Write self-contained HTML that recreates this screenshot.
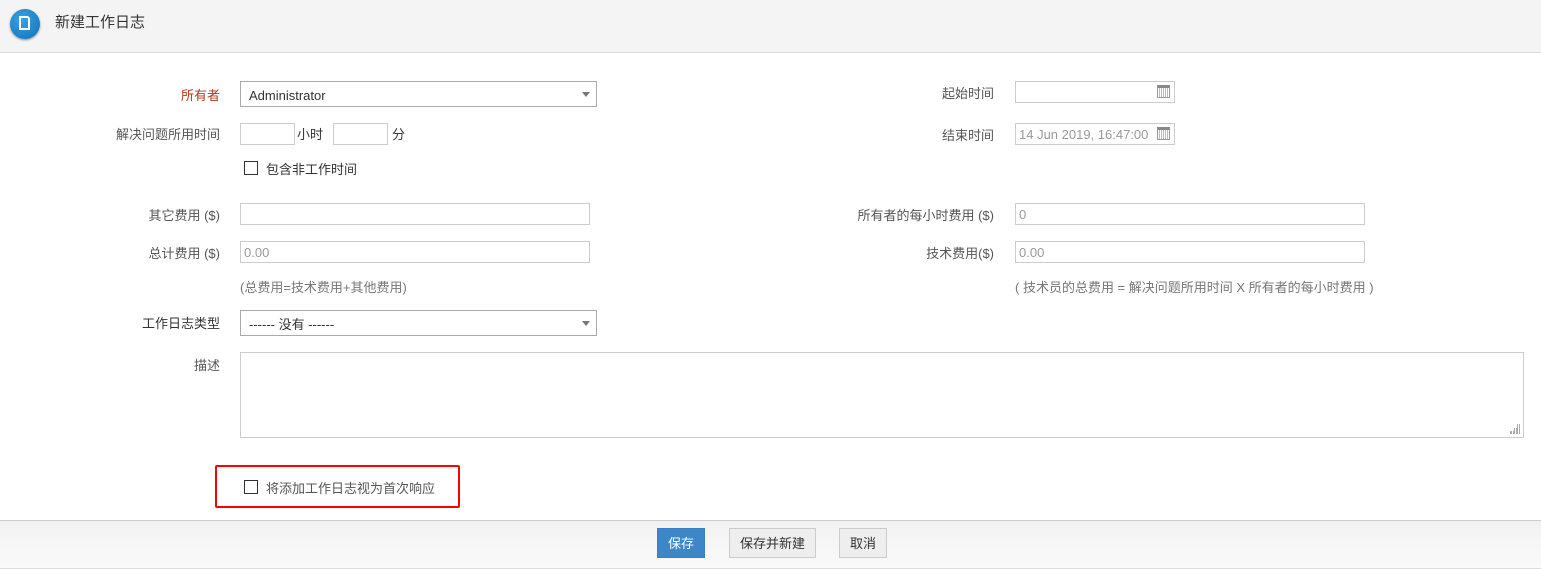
<!DOCTYPE html>
<html><head><meta charset="utf-8"><style>
*{box-sizing:border-box;margin:0;padding:0}
body{width:1541px;height:569px;background:#fff;font-family:"Liberation Sans","Noto Sans CJK SC",sans-serif;font-size:13px;line-height:16px;color:#555;position:relative;overflow:hidden}
.a{position:absolute}
.hdr{left:0;top:0;width:1541px;height:53px;background:#f4f4f4;border-bottom:1px solid #d9d9d9}
.lbl{text-align:right;color:#555;font-size:13px;line-height:16px}
.in{border:1px solid #ccc;background:#fff;font-size:13px;color:#999;padding-left:3px}
.sel{border:1px solid #aaa;background:#fff;color:#333;padding-left:8px;line-height:27px}
.sel:after{content:"";position:absolute;right:6px;top:10px;border:4px solid transparent;border-top:5px solid #777}
.cb{width:14px;height:14px;border:1px solid #333;background:#fff}
.note{color:#777;font-size:13px}
.cal{position:absolute;right:4px;top:3px;width:13px;height:13px;border:1px solid #999;border-top:3px solid #888;background:repeating-linear-gradient(90deg,#fff 0 1px,#bbb 1px 2px)}
.btn{border:1px solid #ccc;background:#eee;color:#333;text-align:center;line-height:29px;font-size:13px}
</style></head><body>
<div class="a hdr"></div>
<div class="a" style="left:10px;top:9px;width:30px;height:30px;border-radius:50%;background:radial-gradient(circle at 40% 35%,#3aa3e3,#0d6fb8);box-shadow:0 1px 2px #888"></div>
<div class="a" style="left:19px;top:16px;width:11px;height:14px;border:2px solid #fff;border-top-right-radius:3px"></div>
<div class="a" style="left:55px;top:13px;font-size:15px;line-height:20px;color:#333">新建工作日志</div>

<div class="a lbl" style="left:100px;width:120px;top:88px;color:#b03a1a">所有者</div>
<div class="a sel" style="left:240px;top:81px;width:357px;height:26px">Administrator</div>
<div class="a lbl" style="left:60px;width:160px;top:127px">解决问题所用时间</div>
<div class="a in" style="left:240px;top:123px;width:55px;height:22px"></div>
<div class="a" style="left:297px;top:127px;color:#333">小时</div>
<div class="a in" style="left:333px;top:123px;width:55px;height:22px"></div>
<div class="a" style="left:392px;top:127px;color:#333">分</div>
<div class="a cb" style="left:244px;top:161px"></div>
<div class="a" style="left:266px;top:162px;color:#333">包含非工作时间</div>

<div class="a lbl" style="left:60px;width:160px;top:208px">其它费用 ($)</div>
<div class="a in" style="left:240px;top:203px;width:350px;height:22px"></div>
<div class="a lbl" style="left:60px;width:160px;top:246px">总计费用 ($)</div>
<div class="a in" style="left:240px;top:241px;width:350px;height:22px;line-height:21px">0.00</div>
<div class="a note" style="left:240px;top:280px">(总费用=技术费用+其他费用)</div>
<div class="a lbl" style="left:60px;width:160px;top:316px;color:#333">工作日志类型</div>
<div class="a sel" style="left:240px;top:310px;width:357px;height:26px">------ 没有 ------</div>
<div class="a lbl" style="left:60px;width:160px;top:358px">描述</div>
<div class="a in" style="left:240px;top:352px;width:1284px;height:86px"></div>
<div class="a" style="left:1510px;top:424px;width:10px;height:10px;background:linear-gradient(#fff,#fff) 0 0/7px 4px no-repeat,linear-gradient(#fff,#fff) 0 0/4px 7px no-repeat,repeating-linear-gradient(90deg,#aaa 0 2px,#fff 2px 3px)"></div>

<div class="a lbl" style="left:800px;width:194px;top:86px">起始时间</div>
<div class="a in" style="left:1015px;top:81px;width:160px;height:22px"><span class="cal"></span></div>
<div class="a lbl" style="left:800px;width:194px;top:128px">结束时间</div>
<div class="a in" style="left:1015px;top:123px;width:160px;height:22px;line-height:21px">14 Jun 2019, 16:47:00<span class="cal"></span></div>
<div class="a lbl" style="left:800px;width:194px;top:208px">所有者的每小时费用 ($)</div>
<div class="a in" style="left:1015px;top:203px;width:350px;height:22px;line-height:21px">0</div>
<div class="a lbl" style="left:800px;width:194px;top:246px">技术费用($)</div>
<div class="a in" style="left:1015px;top:241px;width:350px;height:22px;line-height:21px">0.00</div>
<div class="a note" style="left:1015px;top:280px">( 技术员的总费用 = 解决问题所用时间 X 所有者的每小时费用 )</div>

<div class="a" style="left:215px;top:465px;width:245px;height:43px;border:2px solid #f00;border-radius:2px"></div>
<div class="a cb" style="left:244px;top:480px"></div>
<div class="a" style="left:266px;top:481px;color:#555">将添加工作日志视为首次响应</div>

<div class="a" style="left:0;top:520px;width:1541px;height:49px;background:linear-gradient(#f2f2f2,#fafafa);border-top:1px solid #ccc;border-bottom:1px solid #ddd"></div>
<div class="a btn" style="left:657px;top:528px;width:48px;height:30px;background:#3d87c9;border-color:#3a7fbf;color:#fff">保存</div>
<div class="a btn" style="left:729px;top:528px;width:87px;height:30px">保存并新建</div>
<div class="a btn" style="left:839px;top:528px;width:48px;height:30px">取消</div>
</body></html>
